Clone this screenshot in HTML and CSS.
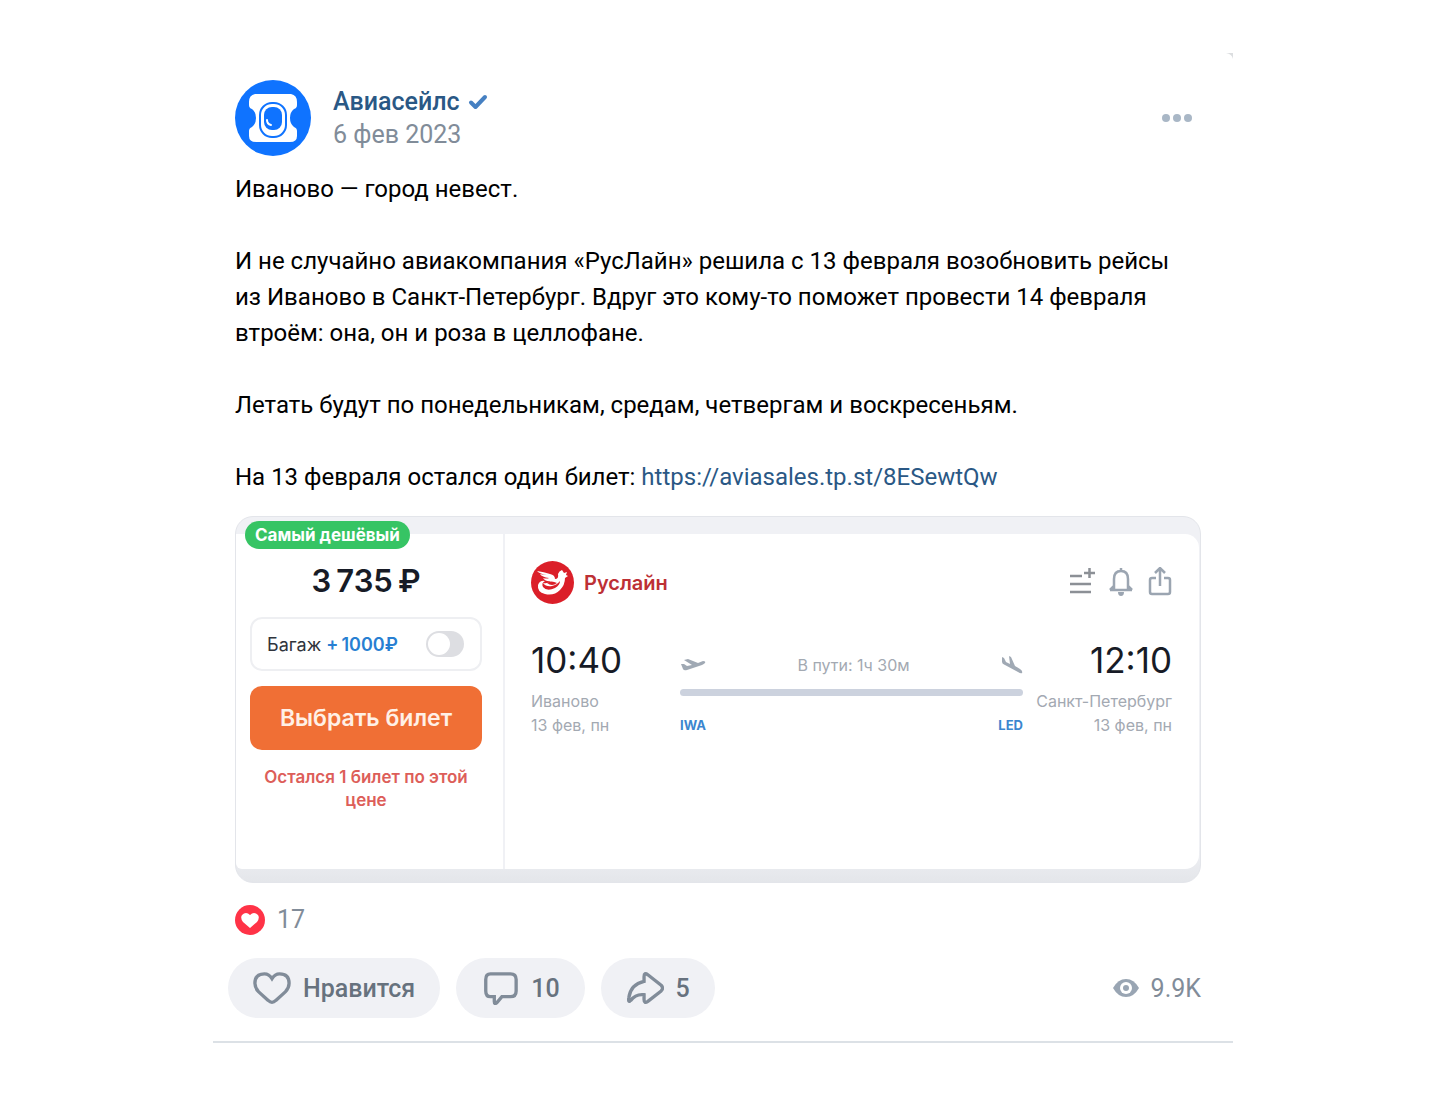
FILE: index.html
```html
<!DOCTYPE html>
<html lang="ru">
<head>
  <meta charset="UTF-8">
  <meta name="viewport" content="width=device-width, initial-scale=1.0">
  <title>Авиасейлс</title>
  <link rel="stylesheet" href="styles.css">
</head>
<body>
  <article class="post">
    <svg class="post-corner" viewBox="0 0 7 6" aria-hidden="true"><path d="M0 0H7V6Q6 1 0 0Z" fill="#dcdee0"/></svg>

    <header class="post-header">
      <svg class="avatar" viewBox="0 0 76 76" aria-hidden="true">
        <circle cx="38" cy="38" r="38" fill="#0f73ff"/>
        <path d="M20 14H56Q62 15 62 22V25Q62 28 59 29Q55 32 55 38Q55 44 59 47Q62 48 62 51V56Q62 62 55 62H21Q14 62 14 56V51Q14 48 17 47Q21 44 21 38Q21 32 17 29Q14 28 14 25V22Q14 15 20 14Z" fill="#fff"/>
        <rect x="25" y="23" width="26" height="34" rx="12" fill="#fff" stroke="#0f73ff" stroke-width="2"/>
        <rect x="29" y="27" width="18" height="23" rx="8" fill="#0f73ff"/>
        <path d="M32 40Q32 44 36 45" fill="none" stroke="#fff" stroke-width="2" stroke-linecap="round"/>
      </svg>
      <div class="post-author">
        <a class="author-name" href="#">Авиасейлс
          <svg class="verified" viewBox="0 0 20 16" aria-hidden="true"><path d="M3 8.500L7.500 13L17 3" fill="none" stroke="#4680c2" stroke-width="4" stroke-linecap="round" stroke-linejoin="round"/></svg>
        </a>
        <time class="post-date" datetime="2023-02-06">6 фев 2023</time>
      </div>
      <button class="more-btn" type="button" aria-label="Ещё">
        <svg viewBox="0 0 32 10" aria-hidden="true"><g fill="#a9b7c6"><circle cx="5" cy="5" r="4"/><circle cx="16" cy="5" r="4"/><circle cx="27" cy="5" r="4"/></g></svg>
      </button>
    </header>

    <div class="post-text">
      <p>Иваново — город невест.</p>
      <p>И не случайно авиакомпания «РусЛайн» решила с 13 февраля возобновить рейсы<br>
        из Иваново в Санкт-Петербург. Вдруг это кому-то поможет провести 14 февраля<br>
        втроём: она, он и роза в целлофане.</p>
      <p>Летать будут по понедельникам, средам, четвергам и воскресеньям.</p>
      <p>На 13 февраля остался один билет: <a href="#">https://aviasales.tp.st/8ESewtQw</a></p>
    </div>

    <!-- Билет -->
    <section class="ticket">
      <span class="ticket-badge">Самый дешёвый</span>
      <div class="ticket-body">
        <div class="ticket-price">
          <div class="price">3&#8201;735&#8201;₽</div>
          <label class="baggage">
            <span class="baggage-text">Багаж <b>+&#8201;1000₽</b></span>
            <input class="toggle" type="checkbox">
          </label>
          <button class="select-btn" type="button">Выбрать билет</button>
          <p class="ticket-left">Остался 1 билет по этой цене</p>
        </div>

        <div class="ticket-info">
          <div class="airline">
            <svg class="airline-logo" viewBox="0 0 43 43" aria-hidden="true">
              <circle cx="21.500" cy="21.500" r="21.500" fill="#db1f29"/>
              <path d="M6 10Q13 11 19 13Q24 14 24 18Q28 18 27 13Q28 10 31 9L33 12L36 11L35 14L37 15L34 17Q34 24 29 29Q23 35 14 33Q6 31 7 24Q9 19 14 20Q10 22 12 26Q16 31 24 27Q29 24 29 20Q26 24 21 25Q15 26 12 22Q17 23 20 20Q15 21 12 17Q16 18 18 17Q11 16 9 13Q13 14 16 14Q9 13 6 10Z" fill="#fff"/>
              <path d="M16 22Q21 26 26 22Q20 19 16 22Z" fill="#db1f29"/>
            </svg>
            <span class="airline-name">Руслайн</span>
            <div class="ticket-actions">
              <button type="button" aria-label="Добавить в список">
                <svg viewBox="0 3 30 32" aria-hidden="true"><path d="M3 12H15M3 20H24M3 28H24M17 9H28M22.500 4V14" fill="none" stroke="#8c9096" stroke-width="2.500"/></svg>
              </button>
              <button type="button" aria-label="Подписаться на цену">
                <svg viewBox="0 3 30 32" aria-hidden="true"><path d="M15 4V6M4 26H26M8 25V15Q8 7 15 7Q22 7 22 15V25M4 26L8 22M26 26L22 22" fill="none" stroke="#9ba5b1" stroke-width="2.500"/><path d="M12 28H18Q18 32 15 32Q12 32 12 28Z" fill="#9ba5b1"/></svg>
              </button>
              <button type="button" aria-label="Поделиться">
                <svg viewBox="0 3 30 32" aria-hidden="true"><path d="M11 14H7Q5 14 5 16V28Q5 30 7 30H23Q25 30 25 28V16Q25 14 23 14H19M15 22V4M10 9L15 4L20 9" fill="none" stroke="#9ba5b1" stroke-width="2.500"/></svg>
              </button>
            </div>
          </div>

          <div class="route">
            <div class="route-point">
              <div class="route-time">10:40</div>
              <div>Иваново</div>
              <div>13 фев, пн</div>
            </div>
            <div class="route-way">
              <div class="way-top">
                <svg viewBox="0 0 26 16" aria-hidden="true"><path d="M1 7L4 7L7 9L12 8L4 3L8 2L18 6L23 4Q26 4 25 6Q24 7 22 8L7 13Q4 14 3 12Z" fill="#a0a9b4"/></svg>
                <span>В пути: 1ч 30м</span>
                <svg class="plane-land" viewBox="0 0 22 20" aria-hidden="true"><path d="M1 2L3 3L5 7L9 9L8 1L10 2L14 11L19 14Q22 16 21 18Q20 19 17 17L4 10Q1 9 1 7Z" fill="#a0a9b4"/></svg>
              </div>
              <div class="way-line"></div>
              <div class="way-codes"><span>IWA</span><span>LED</span></div>
            </div>
            <div class="route-point arrival">
              <div class="route-time">12:10</div>
              <div>Санкт-Петербург</div>
              <div>13 фев, пн</div>
            </div>
          </div>
        </div>
      </div>
    </section>

    <div class="reactions">
      <svg viewBox="0 0 30 30" aria-hidden="true">
        <circle cx="15" cy="15" r="15" fill="#ff3347"/>
        <path d="M15 23L8 17Q5 13 7 10Q11 6 15 10Q19 6 23 10Q25 13 22 17Z" fill="#fff"/>
      </svg>
      <span>17</span>
    </div>

    <footer class="post-footer">
      <button class="action-btn" type="button">
        <svg viewBox="0 0 40 36" aria-hidden="true"><path d="M20 33Q18 33 16 31L6 22Q2 18 2 13Q2 3 12 3Q17 3 20 8Q23 3 28 3Q38 3 38 13Q38 18 34 22L24 31Q22 33 20 33Z"/></svg>
        <span>Нравится</span>
      </button>
      <button class="action-btn" type="button" aria-label="Комментарии">
        <svg viewBox="0 0 40 36" aria-hidden="true"><path d="M10 3H31Q37 3 37 9V21Q37 27 31 27H22L17 33Q14 36 14 32V27H10Q5 27 5 21V9Q5 3 10 3Z"/></svg>
        <span>10</span>
      </button>
      <button class="action-btn" type="button" aria-label="Поделиться">
        <svg viewBox="0 0 40 36" aria-hidden="true"><path d="M19 11V6Q19 1 23 4L37 15Q40 18 37 21L23 32Q19 35 19 30V25Q10 24 5 31Q2 34 3 28Q5 14 19 11Z"/></svg>
        <span>5</span>
      </button>
      <div class="views">
        <svg viewBox="0 0 26 18" aria-hidden="true"><path d="M0 9Q5 0 13 0T26 9Q21 18 13 18T0 9Z" fill="#99a5b3"/><circle cx="13" cy="9" r="6" fill="#fff"/><circle cx="13" cy="9" r="3" fill="#99a5b3"/></svg>
        <span>9.9K</span>
      </div>
    </footer>
  </article>
</body>
</html>
```
FILE: styles.css
```css
* {
  box-sizing: border-box;
}

body {
  margin: 0;
  padding: 53px 16px;
  background: #fff;
  color: #000;
  font-family: Roboto, Arial, sans-serif;
  font-size: 25px;
}

p {
  margin: 0;
}

a {
  color: #2a5885;
  text-decoration: none;
}

button {
  padding: 0;
  border: none;
  background: none;
  font-family: inherit;
  cursor: pointer;
}

svg {
  display: block;
  flex-shrink: 0;
}

.post {
  position: relative;
  max-width: 1020px;
  margin: 0 auto;
  padding: 27px 32px 23px 22px;
  border-bottom: 2px solid #dce1e6;
}

.post-corner {
  position: absolute;
  top: 0;
  right: 0;
  width: 7px;
}

/* Шапка */
.post-header {
  display: flex;
  align-items: center;
  gap: 22px;
  margin-bottom: 15px;
}

.avatar {
  width: 76px;
}

.post-author {
  flex: 1;
  line-height: 33px;
}

.author-name {
  display: flex;
  align-items: center;
  gap: 8px;
  font-weight: 500;
}

.verified {
  width: 20px;
}

.post-date {
  display: block;
  color: #818c99;
}

.more-btn svg {
  width: 32px;
  margin-right: 8px;
}

/* Текст */
.post-text {
  display: flex;
  flex-direction: column;
  gap: 36px;
  margin-bottom: 21px;
  font-size: 24px;
  line-height: 36px;
}

/* Билет */
.ticket {
  position: relative;
  padding: 17px 1px 13px 0;
  border: 1px solid #e3e5ea;
  border-radius: 18px;
  background: linear-gradient(#f0f1f5 90%, #e4e6ea);
  font-family: Inter, sans-serif;
}

.ticket-badge {
  position: absolute;
  top: 4px;
  left: 9px;
  padding: 0 10px;
  border-radius: 14px;
  background: #36c464;
  color: #fff;
  font-size: 17px;
  font-weight: 700;
  line-height: 28px;
}

.ticket-body {
  display: flex;
  min-height: 335px;
  border-radius: 0 14px 14px 6px;
  background: #fff;
}

.ticket-price {
  display: flex;
  flex-direction: column;
  width: 269px;
  padding: 27px 21px 0 14px;
  border-right: 2px solid #f0f1f5;
  text-align: center;
}

.price {
  margin-bottom: 16px;
  color: #171b26;
  font-size: 31px;
  font-weight: 600;
  line-height: 40px;
}

.baggage {
  display: flex;
  align-items: center;
  justify-content: space-between;
  height: 54px;
  margin-bottom: 15px;
  padding: 0 16px 0 15px;
  border: 2px solid #eeeff2;
  border-radius: 12px;
  color: #30343c;
  font-size: 18px;
}

.baggage b {
  color: #287fd2;
  font-weight: 600;
}

.toggle {
  appearance: none;
  width: 38px;
  height: 26px;
  margin: 0;
  padding: 2px;
  border-radius: 13px;
  background: #dddee2;
}

.toggle::before {
  content: "";
  display: block;
  width: 22px;
  height: 22px;
  border-radius: 50%;
  background: #fff;
}

.toggle:checked::before {
  margin-left: auto;
}

.select-btn {
  height: 64px;
  margin-bottom: 16px;
  border-radius: 12px;
  background: #f06f35;
  color: #fff0e6;
  font-size: 23px;
  font-weight: 600;
}

.ticket-left {
  color: #dd5e59;
  font-size: 17px;
  font-weight: 600;
  line-height: 23px;
}

.ticket-info {
  flex: 1;
  padding: 27px 27px 0 26px;
}

.airline {
  display: flex;
  align-items: center;
  gap: 10px;
  margin-bottom: 32px;
}

.airline-logo {
  width: 43px;
}

.airline-name {
  color: #bd3035;
  font-size: 20px;
  font-weight: 600;
}

.ticket-actions {
  display: flex;
  gap: 9px;
  margin: 0 -3px 0 auto;
}

.ticket-actions svg {
  width: 30px;
}

.route {
  display: grid;
  grid-template-columns: 149px 1fr 149px;
  color: #a3a9b2;
  font-size: 16px;
  line-height: 24px;
}

.route-time {
  margin-bottom: 5px;
  color: #171b26;
  font-size: 35px;
  line-height: 48px;
}

.arrival {
  text-align: right;
}

.way-top {
  display: flex;
  align-items: center;
  justify-content: space-between;
  margin-top: 17px;
}

.way-top svg {
  width: 26px;
}

.way-top .plane-land {
  width: 22px;
}

.way-line {
  height: 7px;
  margin: 12px 0 17px;
  border-radius: 4px;
  background: #ccd2de;
}

.way-codes {
  display: flex;
  justify-content: space-between;
  color: #3b86cf;
  font-size: 13px;
  font-weight: 700;
}

/* Реакции и кнопки */
.reactions {
  display: flex;
  align-items: center;
  gap: 12px;
  margin: 22px 0 23px;
  color: #818c99;
  line-height: 30px;
}

.reactions svg {
  width: 30px;
}

.post-footer {
  display: flex;
  align-items: center;
  gap: 16px;
  margin-left: -7px;
}

.action-btn {
  display: flex;
  align-items: center;
  gap: 12px;
  height: 60px;
  padding: 0 25px;
  border-radius: 30px;
  background: #f0f1f5;
  color: #67727e;
  font-size: 25px;
  font-weight: 500;
}

.action-btn svg {
  width: 38px;
  fill: none;
  stroke: #818c99;
  stroke-width: 3.5px;
}

.views {
  display: flex;
  align-items: center;
  gap: 12px;
  margin-left: auto;
  color: #818c99;
}

.views svg {
  width: 26px;
}
```
